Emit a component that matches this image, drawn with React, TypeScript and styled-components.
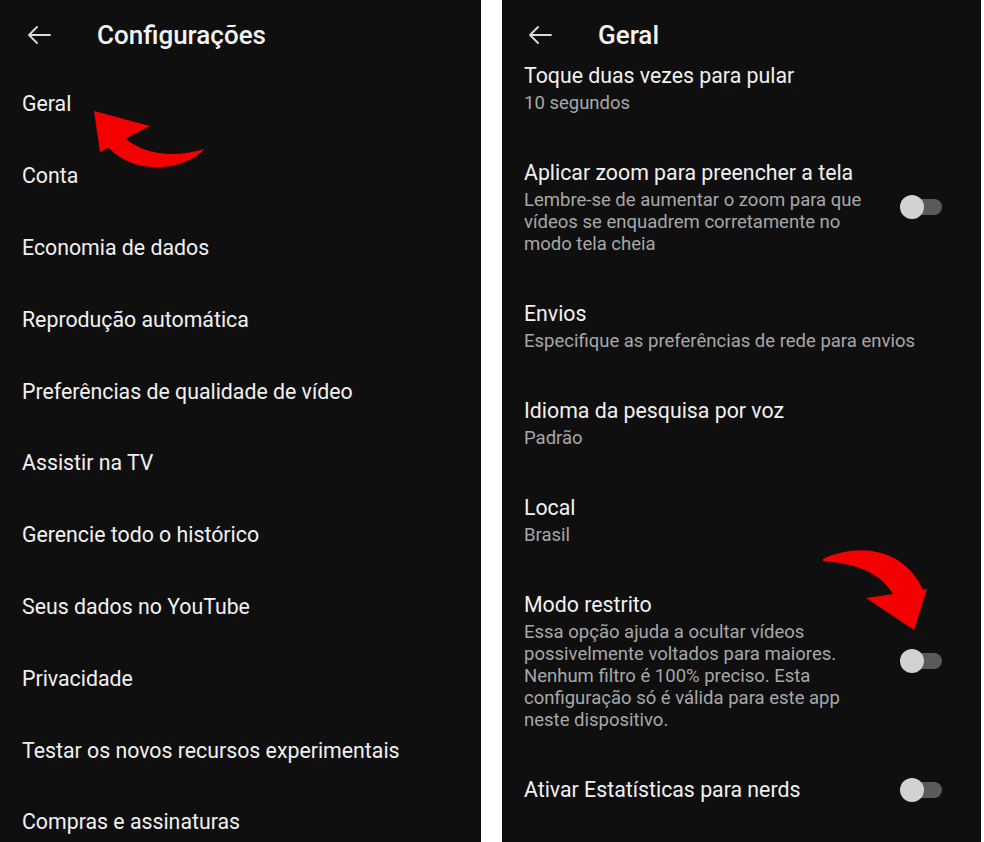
import React from 'react'
import styled, {createGlobalStyle} from 'styled-components'

const GlobalStyle = createGlobalStyle`
  html, body {
    margin: 0;
    padding: 0;
    background: #ffffff;
  }
  body {
    font-family: Roboto, "Noto Sans", "Liberation Sans", sans-serif;
  }
`

type Setting = {
  title: string
  lines?: string[]
  toggle?: boolean
}

const mainItems = [
  'Geral',
  'Conta',
  'Economia de dados',
  'Reprodução automática',
  'Preferências de qualidade de vídeo',
  'Assistir na TV',
  'Gerencie todo o histórico',
  'Seus dados no YouTube',
  'Privacidade',
  'Testar os novos recursos experimentais',
  'Compras e assinaturas',
]

const generalItems: Setting[] = [
  {title: 'Toque duas vezes para pular', lines: ['10 segundos']},
  {
    title: 'Aplicar zoom para preencher a tela',
    lines: [
      'Lembre-se de aumentar o zoom para que',
      'vídeos se enquadrem corretamente no',
      'modo tela cheia',
    ],
    toggle: true,
  },
  {title: 'Envios', lines: ['Especifique as preferências de rede para envios']},
  {title: 'Idioma da pesquisa por voz', lines: ['Padrão']},
  {title: 'Local', lines: ['Brasil']},
  {
    title: 'Modo restrito',
    lines: [
      'Essa opção ajuda a ocultar vídeos',
      'possivelmente voltados para maiores.',
      'Nenhum filtro é 100% preciso. Esta',
      'configuração só é válida para este app',
      'neste dispositivo.',
    ],
    toggle: true,
  },
  {title: 'Ativar Estatísticas para nerds', toggle: true},
]

function BackArrow() {
  return (
    <svg width="24" height="18" viewBox="0 0 24 18" fill="none">
      <path d="M23 9H2M10 1L2 9l8 8" stroke="#dcdcdc" strokeWidth="1.8" strokeLinecap="round" strokeLinejoin="round" />
    </svg>
  )
}

function Toggle() {
  return (
    <Switch>
      <Track />
      <Thumb />
    </Switch>
  )
}

export default function App() {
  return (
    <>
      <GlobalStyle />
      <Page>
        <Panel $width={481}>
          <Header $height={68} $left={27}>
            <BackArrow />
            <HeaderTitle>Configurações</HeaderTitle>
          </Header>
          {mainItems.map(item => (
            <MenuItem key={item}>{item}</MenuItem>
          ))}
          <Annotation viewBox="0 0 481 842">
            <path d="M94 111L150 126L100 152Z" fill="#f40000" />
            <path
              d="M114 127C134 153 168 160 204 149C191 165 155 174 127 161C117 156 109 149 103 142Z"
              fill="#f40000"
            />
          </Annotation>
        </Panel>
        <Panel $width={479}>
          <Header $height={62} $left={26}>
            <BackArrow />
            <HeaderTitle>Geral</HeaderTitle>
          </Header>
          <SettingsList>
            {generalItems.map(item => (
              <SettingRow key={item.title}>
                <SettingText>
                  <SettingTitle>{item.title}</SettingTitle>
                  {item.lines && (
                    <SettingDescription>
                      {item.lines.map(line => (
                        <Line key={line}>{line}</Line>
                      ))}
                    </SettingDescription>
                  )}
                </SettingText>
                {item.toggle && <Toggle />}
              </SettingRow>
            ))}
          </SettingsList>
          <Annotation viewBox="0 0 479 842">
            <path d="M364 598L425 589L412 630Z" fill="#f40000" />
            <path
              d="M321 559C360 541 404 551 421 590L393 597C380 575 360 564 321 561Z"
              fill="#f40000"
            />
          </Annotation>
        </Panel>
      </Page>
    </>
  )
}

const Page = styled.div`
  display: flex;
  gap: 21px;
  width: 984px;
  height: 842px;
  overflow: hidden;
  background: #ffffff;
`

const Panel = styled.div<{$width: number}>`
  position: relative;
  display: flex;
  flex-direction: column;
  width: ${p => p.$width}px;
  height: 842px;
  flex-shrink: 0;
  background: #0f0f0f;
  overflow: hidden;
`

const Header = styled.div<{$height: number; $left: number}>`
  display: flex;
  align-items: center;
  gap: 46px;
  box-sizing: border-box;
  height: ${p => p.$height}px;
  padding-top: ${p => 70 - p.$height}px;
  padding-left: ${p => p.$left}px;
  flex-shrink: 0;
`

const HeaderTitle = styled.div`
  font-size: 26px;
  font-weight: 500;
  color: #f3f3f3;
`

const MenuItem = styled.div`
  display: flex;
  align-items: center;
  height: 71.8px;
  flex-shrink: 0;
  padding-left: 22px;
  font-size: 21.3px;
  color: #f1f1f1;
  white-space: nowrap;
`

const SettingsList = styled.div`
  display: flex;
  flex-direction: column;
  gap: 45px;
  padding: 0 39px 0 22px;
`

const SettingRow = styled.div`
  display: flex;
  align-items: center;
  justify-content: space-between;
`

const SettingText = styled.div`
  display: flex;
  flex-direction: column;
`

const SettingTitle = styled.div`
  font-size: 21.3px;
  line-height: 28px;
  color: #f1f1f1;
  white-space: nowrap;
`

const SettingDescription = styled.div`
  margin-top: 2px;
  font-size: 18.5px;
  line-height: 22px;
  color: #a8a8a8;
`

const Line = styled.span`
  display: block;
  white-space: nowrap;
`

const Switch = styled.div`
  position: relative;
  width: 42px;
  height: 24px;
  flex-shrink: 0;
`

const Track = styled.div`
  position: absolute;
  left: 6px;
  right: 0;
  top: 4px;
  height: 16px;
  border-radius: 8px;
  background: #5a5a5a;
`

const Thumb = styled.div`
  position: absolute;
  left: 0;
  top: 0;
  width: 24px;
  height: 24px;
  border-radius: 50%;
  background: #d2d2d2;
`

const Annotation = styled.svg`
  position: absolute;
  inset: 0;
  width: 100%;
  height: 100%;
  pointer-events: none;
`
